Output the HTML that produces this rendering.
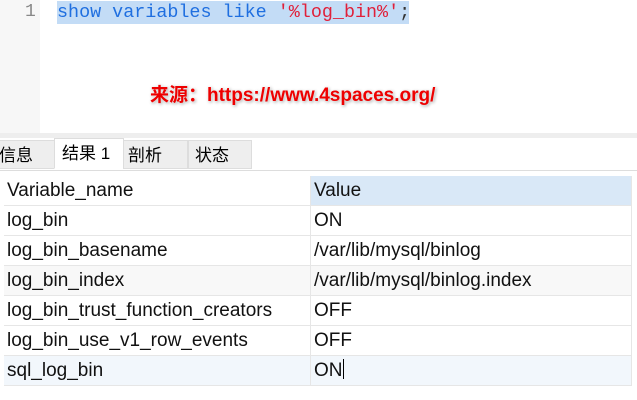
<!DOCTYPE html><html><head><style>
body{margin:0;width:637px;height:400px;overflow:hidden;background:#fff;position:relative;font-family:"Liberation Sans","Noto Sans CJK SC",sans-serif}
.g{position:absolute;left:0;top:0;width:40px;height:133px;background:#f7f7f7}
.ln{position:absolute;left:25px;top:2px;font:18px "Liberation Mono",monospace;color:#888}
.code{position:absolute;left:57px;top:1px;height:23px;width:352px;background:#c3dcf6;font:18.4px/23px "Liberation Mono",monospace;color:#1f6fe0;white-space:pre}
.code b{font-weight:normal;color:#e0203a}.code i{font-style:normal;color:#333}
.wm{position:absolute;left:150px;top:80px;font-weight:bold;font-size:19px;color:#e00;text-shadow:0 0 3px #fff,1px 1px 3px #888}
.sep{position:absolute;left:0;top:133px;width:637px;height:5px;background:#eee}
.tabs{position:absolute;top:140px;left:0;height:30px;width:637px;border-bottom:1px solid #ddd}
.t{position:absolute;top:0;height:29px;font-size:17px;line-height:30px;background:#eee;border:1px solid #ddd;box-sizing:border-box;padding-left:4px}
table{position:absolute;left:4px;top:176px;border-collapse:collapse;font-size:19px;color:#111}
td{height:29px;padding:0 0 0 3px;border-bottom:1px solid #e6e6e6;border-right:1px solid #e6e6e6;line-height:29px}
td:first-child{width:303px}td:last-child{width:317px}
.cur{display:inline-block;width:1px;height:20px;background:#000;vertical-align:-3px}
</style></head><body>
<div class="g"></div><div class="ln">1</div>
<div class="code">show variables like <b>'%log_bin%'</b><i>;</i></div>
<div class="wm">来源：https://www.4spaces.org/</div>
<div class="sep"></div>
<div class="tabs">
<div class="t" style="left:-6px;width:61px">信息</div>
<div class="t" style="left:54px;width:70px;background:#fff;border-bottom:1px solid #fff;height:31px;top:-2px;padding-left:7px">结果 1</div>
<div class="t" style="left:123px;width:65px">剖析</div>
<div class="t" style="left:188px;width:64px;padding-left:6px">状态</div>
</div>
<table>
<tr><td>Variable_name</td><td style="background:#d9e8f7">Value</td></tr>
<tr><td>log_bin</td><td>ON</td></tr>
<tr><td>log_bin_basename</td><td>/var/lib/mysql/binlog</td></tr>
<tr style="background:#f8f8f8"><td>log_bin_index</td><td>/var/lib/mysql/binlog.index</td></tr>
<tr><td>log_bin_trust_function_creators</td><td>OFF</td></tr>
<tr><td>log_bin_use_v1_row_events</td><td>OFF</td></tr>
<tr style="background:#f2f7fc"><td>sql_log_bin</td><td>ON<span class="cur"></span></td></tr>
</table>
</body></html>
